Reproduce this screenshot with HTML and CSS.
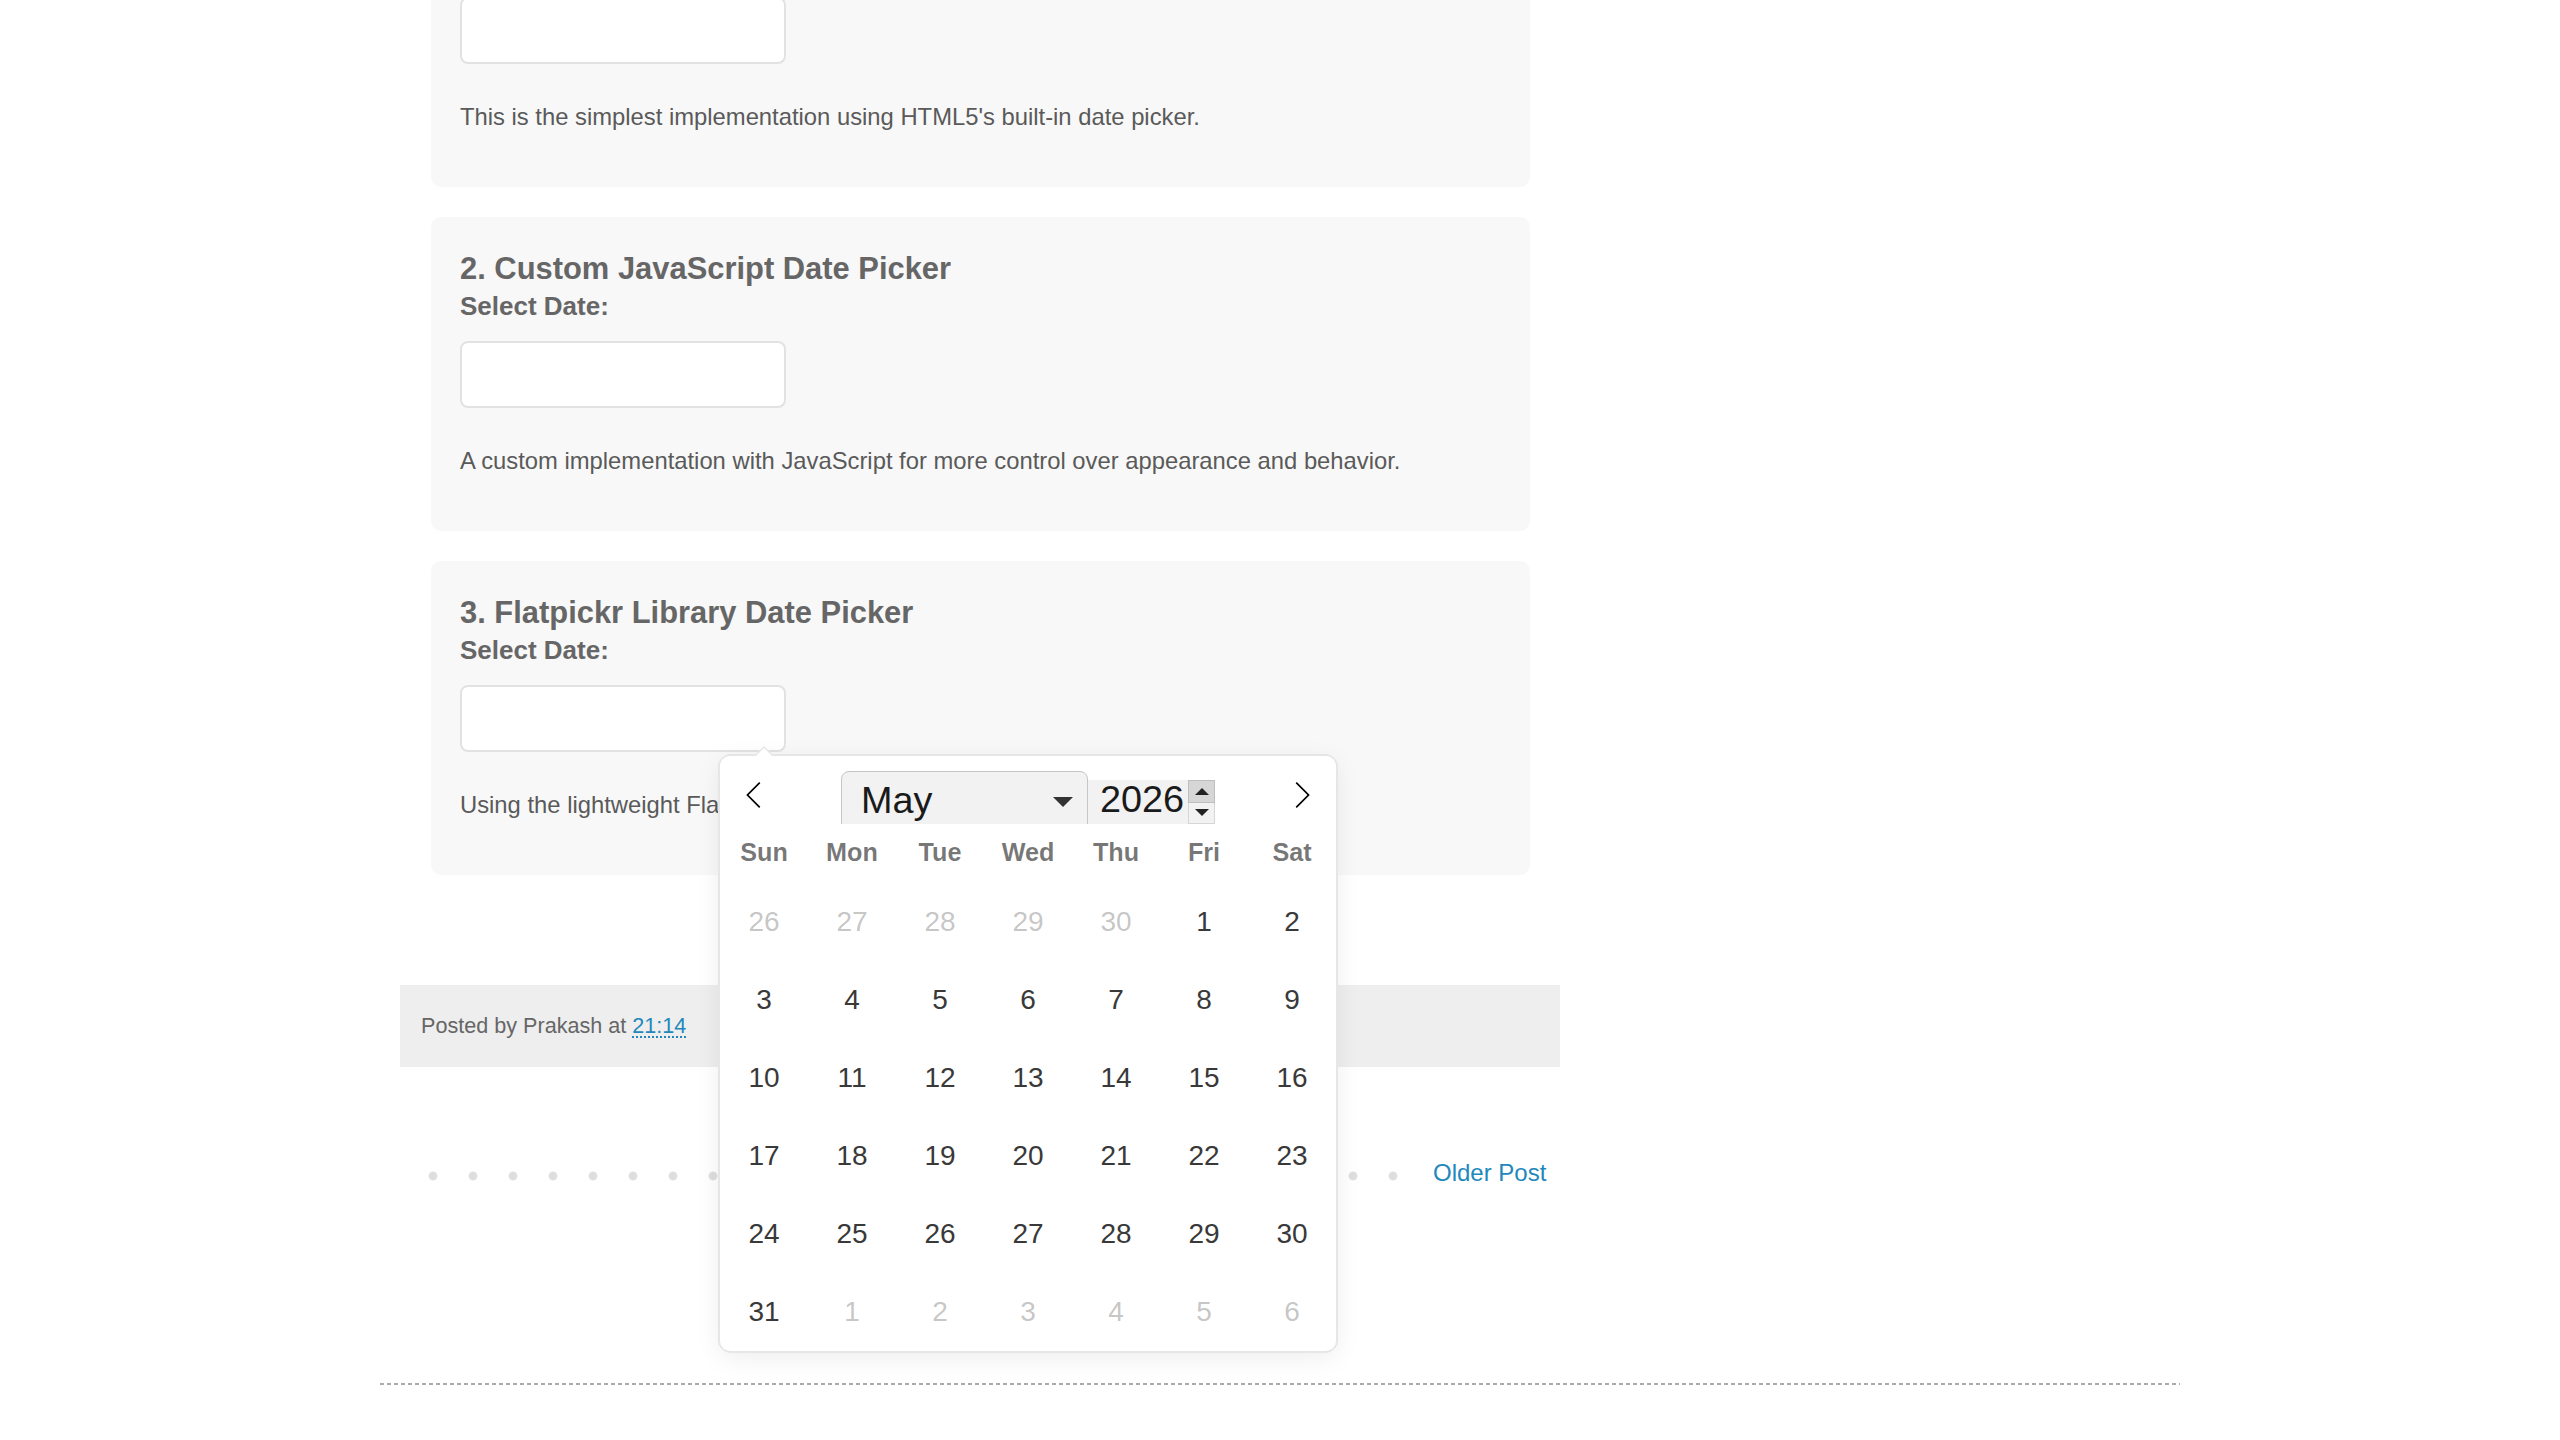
FILE: index.html
```html
<!DOCTYPE html>
<html lang="en">
<head>
<meta charset="utf-8">
<title>Date Picker Examples</title>
<link rel="stylesheet" href="styles.css">
</head>
<body>
<div class="content">
  <div class="main">
    <div class="post-body">
      <section class="card">
        <h3 class="card-title">1. HTML5 Native Date Picker</h3>
        <label class="card-label">Select Date:</label>
        <div class="date-input"></div>
        <p class="card-desc">This is the simplest implementation using HTML5's built-in date picker.</p>
      </section>
      <section class="card">
        <h3 class="card-title">2. Custom JavaScript Date Picker</h3>
        <label class="card-label">Select Date:</label>
        <div class="date-input"></div>
        <p class="card-desc">A custom implementation with JavaScript for more control over appearance and behavior.</p>
      </section>
      <section class="card">
        <h3 class="card-title">3. Flatpickr Library Date Picker</h3>
        <label class="card-label">Select Date:</label>
        <div class="date-input"></div>
        <p class="card-desc">Using the lightweight Flatpickr library for a modern, feature-rich date picker.</p>
      </section>
    </div>
    <div class="post-footer">Posted by Prakash at <a class="time-link">21:14</a></div>
    <div class="pager">
      <span class="dots"></span>
      <a class="older-link">Older Post</a>
    </div>
  </div>
  <div class="divider"></div>
</div>

<div class="fp-cal">
  <div class="fp-months">
    <span class="fp-nav">
      <svg viewBox="0 0 17 17" width="28" height="28"><path d="M5.207 8.471l7.146-7.147-0.707-0.707-7.853 7.854 7.854 7.853 0.707-0.707-7.147-7.146z"/></svg>
    </span>
    <div class="fp-current">
      <div class="fp-select"><span class="fp-month-name">May</span><span class="fp-caret"></span></div>
      <div class="fp-year">
        <span class="fp-year-num">2026</span>
        <span class="fp-spin"><span class="fp-up"></span><span class="fp-down"></span></span>
      </div>
    </div>
    <span class="fp-nav">
      <svg viewBox="0 0 17 17" width="28" height="28"><path d="M13.207 8.472l-7.854 7.854-0.707-0.707 7.146-7.146-7.146-7.148 0.707-0.707 7.854 7.854z"/></svg>
    </span>
  </div>
  <div class="fp-weekdays">
    <span>Sun</span><span>Mon</span><span>Tue</span><span>Wed</span><span>Thu</span><span>Fri</span><span>Sat</span>
  </div>
  <div class="fp-days">
    <span class="muted">26</span><span class="muted">27</span><span class="muted">28</span><span class="muted">29</span><span class="muted">30</span><span>1</span><span>2</span>
    <span>3</span><span>4</span><span>5</span><span>6</span><span>7</span><span>8</span><span>9</span>
    <span>10</span><span>11</span><span>12</span><span>13</span><span>14</span><span>15</span><span>16</span>
    <span>17</span><span>18</span><span>19</span><span>20</span><span>21</span><span>22</span><span>23</span>
    <span>24</span><span>25</span><span>26</span><span>27</span><span>28</span><span>29</span><span>30</span>
    <span>31</span><span class="muted">1</span><span class="muted">2</span><span class="muted">3</span><span class="muted">4</span><span class="muted">5</span><span class="muted">6</span>
  </div>
</div>
</body>
</html>
```

FILE: styles.css
```css
* { box-sizing: border-box; }

html, body {
  margin: 0;
  padding: 0;
  background: #ffffff;
  overflow: hidden;
}

body {
  width: 2560px;
  height: 1440px;
  font-family: "Liberation Sans", Arial, Helvetica, sans-serif;
  color: #555555;
}

.content {
  margin-left: 380px;
  width: 1800px;
}

.main {
  margin-left: 20px;
  width: 1160px;
}

.post-body {
  margin-top: -127px;
  padding: 0 30px 0 31px;
  display: flex;
  flex-direction: column;
  gap: 30px;
}

.card {
  background: #f8f8f8;
  border-radius: 10px;
  padding: 34px 30px 56px 29px;
  display: flex;
  flex-direction: column;
  align-items: flex-start;
}

.card-title {
  margin: 0 0 5px;
  font-size: 30.9px;
  line-height: 36px;
  font-weight: bold;
  color: #666666;
}

.card-label {
  display: block;
  margin: 0 0 21px;
  font-size: 26px;
  line-height: 28px;
  font-weight: bold;
  color: #666666;
}

.date-input {
  width: 326px;
  height: 67px;
  background: #ffffff;
  border: 2px solid #e2e2e2;
  border-radius: 8px;
}

.card-desc {
  margin: 39px 0 0;
  font-size: 23.8px;
  line-height: 28px;
  color: #5a5a5a;
}

.post-footer {
  margin-top: 110px;
  height: 82px;
  background: #eeeeee;
  padding-left: 21px;
  font-size: 21.6px;
  line-height: 82px;
  color: #666666;
}

.time-link {
  color: #2288bb;
  text-decoration: underline dotted #2288bb;
  text-decoration-thickness: 2px;
  text-underline-offset: 3px;
}

.pager {
  margin-top: 81px;
  height: 56px;
  padding-left: 28px;
  display: flex;
  align-items: center;
}

.dots {
  display: block;
  width: 970px;
  height: 10px;
  background-image: radial-gradient(circle at 5px 5px, #dedede 0, #dedede 3.5px, rgba(222, 222, 222, 0) 5.2px);
  background-size: 40px 10px;
  background-repeat: repeat-x;
}

.older-link {
  margin-left: 35px;
  margin-bottom: 6px;
  font-size: 24px;
  line-height: 28px;
  color: #2288bb;
  text-decoration: none;
}

.divider {
  margin-top: 179px;
  height: 2px;
  background-image: repeating-linear-gradient(to right, #ababab 0, #ababab 4px, transparent 4px, transparent 7px);
}

/* Flatpickr calendar overlay */
.fp-cal {
  position: absolute;
  left: 720px;
  top: 756px;
  width: 616px;
  background: #ffffff;
  border-radius: 10px;
  box-shadow: 2px 0 0 #e6e6e6, -2px 0 0 #e6e6e6, 0 2px 0 #e6e6e6, 0 -2px 0 #e6e6e6, 0 6px 26px rgba(0, 0, 0, 0.08);
  color: rgba(0, 0, 0, 0.9);
  z-index: 10;
}

.fp-cal::before,
.fp-cal::after {
  content: "";
  position: absolute;
  left: 44px;
  bottom: 100%;
  width: 0;
  height: 0;
  border: solid transparent;
}

.fp-cal::before {
  margin-left: -10px;
  border-width: 10px;
  border-bottom-color: #e6e6e6;
}

.fp-cal::after {
  margin-left: -8px;
  border-width: 8px;
  border-bottom-color: #ffffff;
}

.fp-months {
  height: 68px;
  overflow: hidden;
  display: flex;
  align-items: flex-start;
}

.fp-nav {
  display: block;
  padding: 25px 20px 15px;
}

.fp-nav svg {
  display: block;
  fill: #000000;
}

.fp-current {
  flex: 1;
  display: flex;
  justify-content: center;
  align-items: flex-start;
  font-size: 37.8px;
  line-height: 36px;
  color: #1a1a1a;
}

.fp-select {
  margin-top: 15px;
  width: 247px;
  height: 72px;
  border: 1.5px solid #c6c6c6;
  border-radius: 8px;
  background: #f2f2f2;
  padding: 10px 14px 0 19px;
  display: flex;
  align-items: flex-start;
}

.fp-month-name {
  display: block;
}

.fp-caret {
  margin-left: auto;
  margin-top: 15px;
  width: 0;
  height: 0;
  border-left: 10px solid transparent;
  border-right: 10px solid transparent;
  border-top: 10px solid #333333;
}

.fp-year {
  margin-top: 24px;
  width: 127px;
  height: 44px;
  background: #f2f2f2;
  padding-left: 12px;
  display: flex;
  align-items: flex-start;
}

.fp-year-num {
  display: block;
  margin-top: 1px;
}

.fp-spin {
  margin-left: auto;
  width: 27px;
  height: 44px;
  display: flex;
  flex-direction: column;
}

.fp-up,
.fp-down {
  flex: 1;
  display: flex;
  align-items: center;
  justify-content: center;
  border: 1px solid rgba(57, 57, 57, 0.15);
}

.fp-up {
  background: #d6d6d6;
}

.fp-down {
  border-top: none;
}

.fp-up::after {
  content: "";
  width: 0;
  height: 0;
  border-left: 7.5px solid transparent;
  border-right: 7.5px solid transparent;
  border-bottom: 7px solid #222222;
}

.fp-down::after {
  content: "";
  width: 0;
  height: 0;
  border-left: 7.5px solid transparent;
  border-right: 7.5px solid transparent;
  border-top: 7px solid #222222;
}

.fp-weekdays {
  height: 56px;
  padding-top: 2px;
  display: flex;
  align-items: center;
}

.fp-weekdays span {
  flex: 1;
  text-align: center;
  font-size: 25.2px;
  line-height: 1;
  font-weight: bold;
  color: rgba(0, 0, 0, 0.54);
}

.fp-days {
  padding-top: 3px;
  display: grid;
  grid-template-columns: repeat(7, 88px);
  grid-auto-rows: 78px;
}

.fp-days span {
  text-align: center;
  font-size: 28px;
  line-height: 78px;
  color: #393939;
}

.fp-days span.muted {
  color: rgba(57, 57, 57, 0.3);
}
```
